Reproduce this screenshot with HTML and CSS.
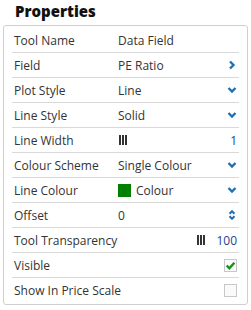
FILE: index.html
```html
<!DOCTYPE html>
<html lang="en">
<head>
    <meta charset="UTF-8">
    <title>Properties</title>
    <link rel="stylesheet" href="styles.css">
</head>
<body>
    <h1 class="title">Properties</h1>

    <div class="panel">
        <div class="row">
            <span class="label">Tool Name</span>
            <span class="value">Data Field</span>
        </div>
        <div class="row">
            <span class="label">Field</span>
            <span class="value">PE Ratio</span>
            <svg class="icon" viewBox="0 0 10 10"><path d="M3 1.5 L6.5 5 L3 8.5" /></svg>
        </div>
        <div class="row">
            <span class="label">Plot Style</span>
            <span class="value">Line</span>
            <svg class="icon" viewBox="0 0 10 10"><path d="M1.5 3 L5 6.5 L8.5 3" /></svg>
        </div>
        <div class="row">
            <span class="label">Line Style</span>
            <span class="value">Solid</span>
            <svg class="icon" viewBox="0 0 10 10"><path d="M1.5 3 L5 6.5 L8.5 3" /></svg>
        </div>
        <div class="row">
            <span class="label">Line Width</span>
            <span class="value"><span class="bars"><i></i><i></i><i></i></span></span>
            <span class="num">1</span>
        </div>
        <div class="row">
            <span class="label">Colour Scheme</span>
            <span class="value">Single Colour</span>
            <svg class="icon" viewBox="0 0 10 10"><path d="M1.5 3 L5 6.5 L8.5 3" /></svg>
        </div>
        <div class="row">
            <span class="label">Line Colour</span>
            <span class="value"><span class="swatch"></span>Colour</span>
            <svg class="icon" viewBox="0 0 10 10"><path d="M1.5 3 L5 6.5 L8.5 3" /></svg>
        </div>
        <div class="row">
            <span class="label">Offset</span>
            <span class="value">0</span>
            <svg class="icon" viewBox="0 0 10 12"><path d="M2 4.5 L5 1.5 L8 4.5 M2 7.5 L5 10.5 L8 7.5" /></svg>
        </div>
        <div class="row">
            <span class="label">Tool Transparency</span>
            <span class="bars"><i></i><i></i><i></i></span>
            <span class="num">100</span>
        </div>
        <div class="row">
            <span class="label">Visible</span>
            <span class="check checked">
                <svg viewBox="0 0 10 10"><path d="M1.5 5 L4 7.5 L8.5 2.5" /></svg>
            </span>
        </div>
        <div class="row">
            <span class="label">Show In Price Scale</span>
            <span class="check"></span>
        </div>
    </div>
</body>
</html>
```

FILE: styles.css
```css
body {
    font-family: "Open Sans", sans-serif;
    margin: 0;
    padding: 0 3px;
    background-color: white;
    color: #333;
    font-size: 12px;
}
.title {
    margin: 0;
    padding: 1px 0 0 12px;
    height: 24px;
    font-size: 15px;
    font-weight: 800;
    color: #111;
}
.panel {
    border: 1px solid #cfcfcf;
    border-radius: 3px;
    padding: 2px 8px 2px 8px;
}
.row {
    display: flex;
    align-items: center;
    height: 24px;
    border-bottom: 1px solid #d9d9d9;
    padding: 0 2px 0 2px;
}
.row:last-child {
    border-bottom: none;
}
.label {
    width: 104px;
    flex-shrink: 0;
    white-space: nowrap;
}
.value {
    flex: 1;
    display: flex;
    align-items: center;
}
.icon {
    width: 10px;
    height: 10px;
    fill: none;
    stroke: #1f6fb5;
    stroke-width: 2.4;
}
.num {
    color: #1f3f8f;
}
.bars {
    display: flex;
    gap: 1px;
    margin-left: 1px;
}
.row > .bars {
    margin-left: auto;
    margin-right: 11px;
}
.bars i {
    display: block;
    width: 2px;
    height: 10px;
    background-color: #333;
}
.swatch {
    display: inline-block;
    width: 13px;
    height: 13px;
    background-color: #008000;
    margin: 0 5px 0 0;
}
.check {
    margin-left: auto;
    width: 11px;
    height: 11px;
    border: 1px solid #c8c8c8;
    background-color: #fafafa;
    display: flex;
}
.check svg {
    width: 11px;
    height: 11px;
    fill: none;
    stroke: #1c8c1c;
    stroke-width: 2.2;
}
```
